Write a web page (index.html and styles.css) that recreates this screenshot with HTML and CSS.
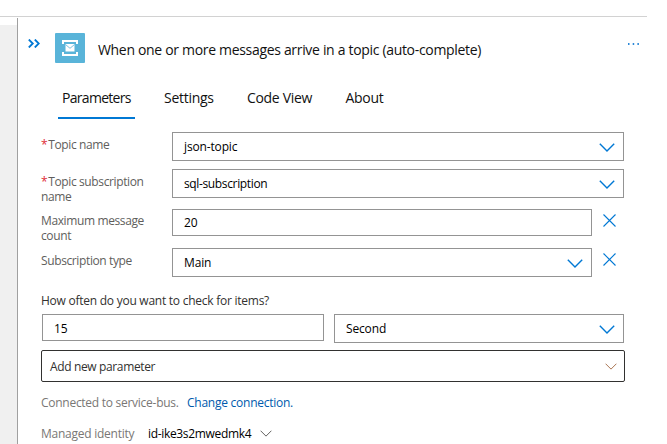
FILE: index.html
```html
<!DOCTYPE html>
<html lang="en">
<head>
<meta charset="utf-8">
<title>Parameters</title>
<link rel="stylesheet" href="styles.css">
</head>
<body>
<svg class="symbols" width="0" height="0">
  <symbol id="chevron" viewBox="0 0 16 9"><path d="M.8.8 8 8 15.200.8"/></symbol>
  <symbol id="cross" viewBox="0 0 13 13"><path d="M.5.5l12 12M12.500.5l-12 12"/></symbol>
</svg>
<div class="topbar"></div>
<div class="workspace">
  <aside class="canvas"></aside>
  <main class="panel">
    <header class="header">
      <svg class="collapse" viewBox="0 0 12 9"><path d="M.8.5l4 4-4 4M6.800.5l4 4-4 4"/></svg>
      <svg class="logo" viewBox="0 0 30 30">
        <rect width="30" height="30" rx="1" fill="#59b4d9"/>
        <path d="M7 7h16v4h-2V9H9v2H7zM7 23h16v-4h-2v2H9v-2H7z" fill="#fff"/>
        <path d="M10.500 11h9v7.500h-9z" fill="#fff"/>
        <path d="M10.500 11.500l4.500 3.800 4.500-3.800" fill="none" stroke="#59b4d9" stroke-width=".8"/>
      </svg>
      <h1 class="title"><span>When one or more messages arrive in a topic (auto-complete)</span></h1>
      <svg class="more" viewBox="0 0 12 2"><path d="M0 0h1.500v2H0zM4.700 0h1.500v2H4.700zM9.400 0h1.500v2H9.400z"/></svg>
    </header>
    <nav class="tabs">
      <a class="tab active">Parameters</a>
      <a class="tab settings">Settings</a>
      <a class="tab code">Code View</a>
      <a class="tab about">About</a>
    </nav>
    <section class="form">
      <div class="row topic">
        <label class="label"><b>*</b>Topic name</label>
        <div class="field select"><span>json-topic</span><svg class="chevron"><use href="#chevron"/></svg></div>
      </div>
      <div class="row subscription">
        <label class="label"><b>*</b>Topic subscription<br>name</label>
        <div class="field select"><span class="tight">sql-subscription</span><svg class="chevron"><use href="#chevron"/></svg></div>
      </div>
      <div class="row count">
        <label class="label">Maximum message<br>count</label>
        <div class="field"><span>20</span></div>
        <svg class="cross"><use href="#cross"/></svg>
      </div>
      <div class="row type">
        <label class="label">Subscription type</label>
        <div class="field select"><span>Main</span><svg class="chevron"><use href="#chevron"/></svg></div>
        <svg class="cross"><use href="#cross"/></svg>
      </div>
    </section>
    <p class="question"><span>How often do you want to check for items?</span></p>
    <div class="interval">
      <div class="field number"><span>15</span></div>
      <div class="field select"><span>Second</span><svg class="chevron"><use href="#chevron"/></svg></div>
    </div>
    <div class="add"><span class="tight">Add new parameter</span><svg class="chevron small rust"><use href="#chevron"/></svg></div>
    <p class="connection"><span>Connected to service-bus.</span><a>Change connection.</a></p>
    <p class="identity"><span>Managed identity</span><strong>id-ike3s2mwedmk4</strong><svg class="chevron small gray"><use href="#chevron"/></svg></p>
  </main>
</div>
</body>
</html>
```
FILE: styles.css
```css
* { box-sizing: border-box; }
body { margin: 0; height: 444px; overflow: hidden; background: #fff; color: #111; font: 12px/15px "Open Sans", "Noto Sans", sans-serif; letter-spacing: -.15px; }
p, h1 { margin: 0; }
.symbols { display: block; height: 0; }
svg { flex: none; }
.topbar { width: 647px; height: 17px; border-bottom: 1px solid #d2d2d2; }
.workspace { display: flex; height: 427px; padding-top: 1px; }
.canvas { width: 17px; margin-top: 7px; background: #f0f0f0; }
.panel { width: 630px; border-left: 1px solid #a0a0a0; padding-left: 23px; }
.header { display: flex; align-items: flex-start; height: 62px; padding-top: 15px; }
.collapse { width: 12px; height: 9px; margin: 6px 15px 0 -13px; fill: none; stroke: #0078d4; stroke-width: 1.8; }
.logo { width: 30px; height: 30px; }
.title { width: 530px; margin: 8px 0 0 13px; font-size: 14px; line-height: 18px; font-weight: 400; letter-spacing: -.32px; white-space: nowrap; }
.more { width: 12px; height: 2px; margin: 10px 0 0 0; fill: #2b88d8; }
.tabs { display: flex; height: 52px; padding: 0 0 13px 17px; font-size: 14px; line-height: 36px; letter-spacing: -.28px; white-space: nowrap; }
.tab { height: 39px; }
.active { width: 77px; padding-left: 4px; border-bottom: 2px solid #0078d4; letter-spacing: -.7px; }
.settings { width: 83px; margin-left: 29px; }
.code { width: 98.5px; letter-spacing: -.32px; }
.row { display: flex; align-items: flex-start; }
.topic { height: 37px; }
.subscription { height: 40px; }
.count { height: 39px; }
.type { height: 44px; }
.label { width: 131px; padding-top: 5px; color: #605e5c; letter-spacing: -.38px; white-space: nowrap; }
.count .label { padding-top: 4px; }
.label b { margin-right: 1px; color: #e02b35; font-weight: 400; }
.field { display: flex; align-items: center; justify-content: space-between; width: 420px; height: 27px; border: 1px solid #949494; padding: 0 8px 0 11px; background: #fff; color: #000; }
.select { height: 29px; }
.topic .field, .subscription .field { width: 452px; }
.tight { letter-spacing: -.36px; }
.chevron { width: 16px; height: 9px; margin-top: 2px; fill: none; stroke: #0078d4; stroke-width: 1.4; }
.small { width: 12px; height: 7px; stroke-width: 1.3; }
.cross { width: 13px; height: 13px; margin: 5px 0 0 10.500px; fill: none; stroke: #0078d4; stroke-width: 1.1; }
.question { height: 22px; padding-top: 1px; color: #323130; letter-spacing: -.25px; }
.interval { display: flex; gap: 10px; height: 36px; padding-left: 1px; }
.interval .field { width: 282px; }
.interval .number { padding-top: 2px; }
.interval .select { width: 290px; }
.add { display: flex; align-items: center; justify-content: space-between; width: 584px; height: 32px; border: 1px solid #323130; border-radius: 2px; padding: 0 7px 0 8px; color: #323130; }
.rust { stroke: #a8714d; margin-top: 0; }
.connection { display: flex; height: 31px; margin-top: 13px; color: #797775; }
.connection span { width: 146px; letter-spacing: -.27px; }
.connection a { color: #005aad; letter-spacing: -.25px; }
.identity { display: flex; align-items: center; height: 15px; color: #797775; }
.identity span { width: 107px; letter-spacing: -.25px; }
.identity strong { width: 112px; color: #000; font-weight: 400; letter-spacing: -.33px; }
.gray { margin: 0; stroke: #605e5c; }
```
